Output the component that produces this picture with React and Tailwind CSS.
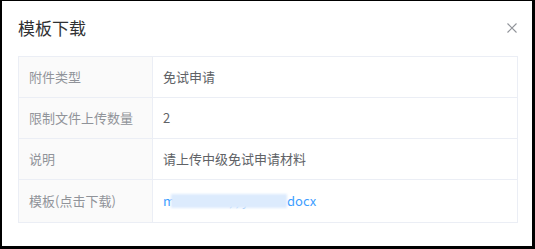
const rows = [
  { label: "附件类型", value: "免试申请" },
  { label: "限制文件上传数量", value: "2" },
  { label: "说明", value: "请上传中级免试申请材料" },
];

export default function App() {
  return (
    <div
      className="h-[249px] w-[535px] overflow-hidden bg-white"
      style={{ fontFamily: '"Noto Sans CJK SC", "Noto Sans", sans-serif' }}
    >
      <div className="box-border h-full w-full border-t border-l-2 border-r-[3px] border-b-[3px] border-black">
        <div className="flex items-center justify-between pl-4 pr-[15px] pt-[15px]">
          <h2 className="text-[17px] leading-6 text-[#303133]">模板下载</h2>
          <svg width="10" height="10" viewBox="0 0 10 10" className="text-[#909399]">
            <path d="M0.5 0.5 L9.5 9.5 M9.5 0.5 L0.5 9.5" stroke="currentColor" strokeWidth="1.1" />
          </svg>
        </div>

        <div className="ml-4 mr-[14px] mt-4 border border-[#ebeef5] text-[13px]">
          {rows.map((r) => (
            <div key={r.label} className="flex h-[41px] border-b border-[#ebeef5]">
              <div className="flex w-[134px] shrink-0 items-center border-r border-[#ebeef5] bg-[#fafafa] px-2.5 text-[#909399]">
                {r.label}
              </div>
              <div className="flex items-center px-2.5 text-[#606266]">{r.value}</div>
            </div>
          ))}
          <div className="flex h-[42px]">
            <div className="flex w-[134px] shrink-0 items-center border-r border-[#ebeef5] bg-[#fafafa] px-2.5 text-[#909399]">
              模板(点击下载)
            </div>
            <div className="flex items-center px-2.5 text-[#409eff]">
              <span>m</span>
              <span className="relative ml-[-4px] inline-block h-[14px] w-[116px]">
                <span className="absolute left-[58px] top-[-3px] text-[#8fc3fa]">, , y</span>
                <span className="absolute inset-0 bg-[#dcebfd] blur-[1px]" />
              </span>
              <span>docx</span>
            </div>
          </div>
        </div>
      </div>
    </div>
  );
}
